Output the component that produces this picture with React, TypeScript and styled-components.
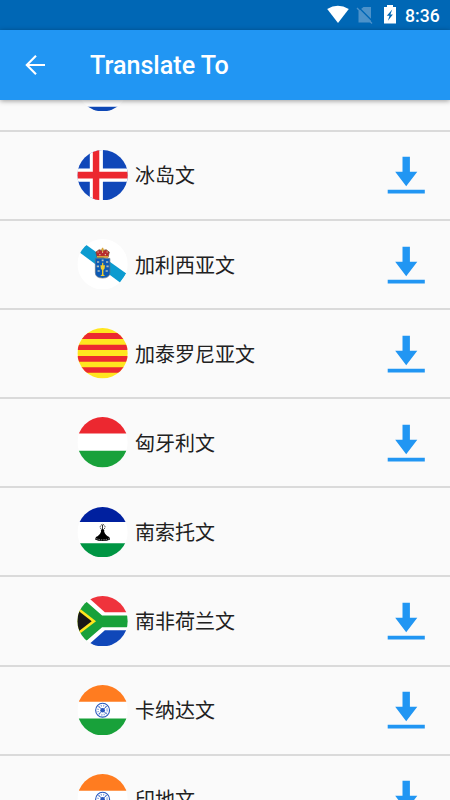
import React from 'react';
import styled, { createGlobalStyle } from 'styled-components';

const GlobalStyle = createGlobalStyle`
  * { box-sizing: border-box; }
  body { margin: 0; background: #fafafa; }
`;

const Screen = styled.div`
  display: flex;
  flex-direction: column;
  width: 450px;
  height: 800px;
  overflow: hidden;
  background: #fafafa;
  color: #212121;
  font-family: Roboto, 'Noto Sans CJK SC', sans-serif;
`;

const StatusBar = styled.header`
  flex: none;
  display: flex;
  align-items: center;
  justify-content: flex-end;
  height: 30px;
  padding: 0 10px 0 0;
  background: #0067b5;
  color: #fff;
`;

const StatusIcons = styled.svg`
  display: block;
  width: 78px;
  height: 30px;
`;

const Clock = styled.span`
  width: 35px;
  font-size: 17.6px;
  line-height: 30px;
  font-weight: 500;
  padding-top: 1px;
  white-space: nowrap;
`;

const AppBar = styled.nav`
  flex: none;
  display: flex;
  align-items: center;
  height: 70px;
  padding-left: 20px;
  background: #2196f3;
  color: #fff;
  box-shadow: 0 1px 5px rgba(0, 0, 0, 0.38);
  z-index: 1;
`;

const BackButton = styled.button`
  width: 30px;
  height: 30px;
  margin-right: 40px;
  padding: 0;
  border: 0;
  background: none;
  color: inherit;
  svg { display: block; }
`;

const Title = styled.h1`
  margin: 0;
  padding-top: 2px;
  font-size: 25.15px;
  line-height: 30px;
  font-weight: 500;
  white-space: nowrap;
`;

const ListViewport = styled.main`
  flex: 1;
  min-height: 0;
  overflow: hidden;
`;

const List = styled.ul`
  margin: -57.6px 0 0;
  padding: 0;
  list-style: none;
`;

const Row = styled.li`
  display: flex;
  align-items: center;
  height: 89.17px;
  padding: 0 25px 0 77px;
  border-bottom: 2px solid #dadada;
`;

const FlagSvg = styled.svg`
  flex: none;
  display: block;
  width: 51px;
  height: 50.4px;
  margin-right: 7px;
`;

const Label = styled.span`
  flex: 1;
  padding-top: 2.5px;
  font-size: 20px;
  line-height: 30px;
  white-space: nowrap;
`;

const DownloadSvg = styled.svg`
  flex: none;
  display: block;
  width: 38px;
  height: 38px;
  margin-top: 0.5px;
`;

type FlagName =
  | 'croatia' | 'iceland' | 'galicia' | 'catalonia'
  | 'hungary' | 'lesotho' | 'southAfrica' | 'india';

const flagArt: Record<FlagName, React.ReactNode> = {
  croatia: (
    <>
      <path fill="#ea2b31" d="M0 0h50v17H0z" />
      <path fill="#0d47b5" d="M0 45.5h50V50H0z" />
    </>
  ),
  iceland: (
    <>
      <path fill="#1047b9" d="M0 0h50v50H0z" />
      <path fill="#fff" d="M12.3 0h13v50h-13zM0 18.4h50v13.2H0z" />
      <path fill="#ec2830" d="M15.3 0h6.4v50h-6.4zM0 21.7h50v6.6H0z" />
    </>
  ),
  galicia: (
    <>
      <path fill="#0c9bd0" d="M1.6 12.9 8.6 5.8l39.9 28.5-6.2 8.8z" />
      <path fill="#0b5ab5" stroke="#5d6f84" strokeWidth=".7" d="M17.8 19.3h14.4v14q0 5.4-7.2 5.4t-7.2-5.4z" />
      <path fill="#b4bdb8" d="M19.4 22h2.2v1.6h-2.2zM28.4 22h2.2v1.6h-2.2zM19.2 26.4h2.2V28h-2.2zM28.8 26.4H31V28h-2.2zM20 31h2.2v1.6H20zM28 31h2.2v1.6H28zM24.1 20.4H26V22h-1.9z" />
      <path fill="#f1cd2d" d="M22.8 26h4.6l-.5 3.4-1.1 1.4v4.4l1.6 1.6h-4.6l1.6-1.6v-4.4l-1.1-1.4zM24.5 23.6h1.2V26h-1.2z" />
      <path fill="#b82b2e" stroke="#73532e" strokeWidth=".7" d="M19.5 18 18.3 13l3.2-2.4 3.5 1 3.5-1 3.2 2.4-1.2 5z" />
      <path fill="#d9a437" d="M19.4 16.8h11.2v1.6H19.4zM24.4 8.8h1.2v4h-1.2zM23.4 9.6h3.2v1h-3.2z" />
      <path fill="#e9e2c3" d="M20 12.4h1v1h-1zM29 12.4h1v1h-1zM24.5 12.6h1v1h-1zM21.8 15h1v1h-1zM27.2 15h1v1h-1z" />
    </>
  ),
  catalonia: (
    <>
      <path fill="#ffe51f" d="M0 0h50v50H0z" />
      <path fill="#ec2830" d="M0 5h50v5.8H0zM0 16.6h50v5.2H0zM0 27.8h50v5.6H0zM0 39h50v5.5H0z" />
    </>
  ),
  hungary: (
    <>
      <path fill="#ec2830" d="M0 0h50v16.4H0z" />
      <path fill="#18a13a" d="M0 33.5h50V50H0z" />
    </>
  ),
  lesotho: (
    <>
      <path fill="#00209f" d="M0 0h50v14.8H0z" />
      <path fill="#009543" d="M0 36h50v14H0z" />
      <path fill="none" stroke="#222" strokeWidth=".8" strokeDasharray="1.4 .7" d="M25 23c-3.2-1.6-3.2-4.6 0-6 3.2 1.4 3.2 4.4 0 6z" />
      <path d="M24.6 17.5h.8v4.5l1.4 1.2-.3 1c.8 3 3 4.4 5.1 5.6l.9 2.4q-2.8 1.6-7.5 1.6t-7.5-1.6l.9-2.4c2.1-1.2 4.3-2.6 5.1-5.6l-.3-1 1.4-1.2z" />
      <path fill="none" stroke="#aaa" strokeWidth=".8" strokeDasharray="1.4 1" d="M18.6 31.4q6.4 2.4 12.8 0" />
    </>
  ),
  southAfrica: (
    <>
      <path fill="#ef333c" d="M9.2 0H50v16H27.2z" />
      <path fill="#1047b9" d="M9.2 50H50V34H27.2z" />
      <path fill="#18a13a" d="M2.5 0 24.5 19.3H50v11.6H24.5L2.5 50H0V0z" />
      <path fill="#ffe51f" d="M0 10.7 18.5 25 0 39.3z" />
      <path fill="#171717" d="M0 14 14.2 25 0 36z" />
    </>
  ),
  india: (
    <>
      <path fill="#ff7c20" d="M0 0h50v16.6H0z" />
      <path fill="#18a13a" d="M0 33.3h50V50H0z" />
      <circle cx="25" cy="25" r="6.9" fill="none" stroke="#2857bd" strokeWidth="1.1" />
      <circle cx="25" cy="25" r="4.6" fill="none" stroke="#8fa9df" strokeWidth="1.8" strokeDasharray="1.2 1.2" />
      <path stroke="#2857bd" strokeWidth=".8" d="m21 21 8 8m0-8-8 8" />
      <circle cx="25" cy="25" r="2.3" fill="#2857bd" />
    </>
  ),
};

function Flag({ name, id }: { name: FlagName; id: string }) {
  return (
    <FlagSvg viewBox="-0.4 0 50.6 50" aria-hidden="true">
      <clipPath id={id}><circle cx="25" cy="25" r="25" /></clipPath>
      <g clipPath={`url(#${id})`}>
        <path fill="#fff" d="M0 0h50v50H0z" />
        {flagArt[name]}
      </g>
    </FlagSvg>
  );
}

function DownloadIcon() {
  return (
    <DownloadSvg viewBox="0 0 38 38" fill="#2196f3" aria-label="Download">
      <path d="M15.5.8h7.4v15h7.4L19.2 30.2 8.2 15.8h7.3zM.7 33.7h37.1v3.8H.7z" />
    </DownloadSvg>
  );
}

const languages: { label: string; flag: FlagName; downloadable: boolean }[] = [
  { label: '', flag: 'croatia', downloadable: false },
  { label: '冰岛文', flag: 'iceland', downloadable: true },
  { label: '加利西亚文', flag: 'galicia', downloadable: true },
  { label: '加泰罗尼亚文', flag: 'catalonia', downloadable: true },
  { label: '匈牙利文', flag: 'hungary', downloadable: true },
  { label: '南索托文', flag: 'lesotho', downloadable: false },
  { label: '南非荷兰文', flag: 'southAfrica', downloadable: true },
  { label: '卡纳达文', flag: 'india', downloadable: true },
  { label: '印地文', flag: 'india', downloadable: true },
];

export default function App() {
  return (
    <Screen lang="zh-CN">
      <GlobalStyle />
      <StatusBar>
        <StatusIcons viewBox="327 0 78 30" aria-hidden="true">
          <path fill="#fff" d="M327.2 9q10.5-6.3 21.6 0L338 23z" />
          <path fill="#4c92ca" d="M363.5 7H371v15.5h-12.5V11z" />
          <path stroke="#0067b5" strokeWidth="1.5" d="m358 6.8 15 15" />
          <path stroke="#4c92ca" strokeWidth="1.3" d="m357 8 15 15.5" />
          <path fill="#fff" d="M387 5h6v2h3v16.5h-12V7h3z" />
          <path fill="#0067b5" d="m392.2 9.5-5.4 6.3h2.7l-1.6 5 5-6.3h-2.5z" />
        </StatusIcons>
        <Clock>8:36</Clock>
      </StatusBar>
      <AppBar>
        <BackButton aria-label="Back">
          <svg width="30" height="30" viewBox="0 0 30 30" fill="none" stroke="#fff" strokeWidth="2.1">
            <path d="M25 15H7M16 5.8 6.8 15l9.2 9.2" />
          </svg>
        </BackButton>
        <Title>Translate To</Title>
      </AppBar>
      <ListViewport>
        <List>
          {languages.map(({ label, flag, downloadable }, index) => (
            <Row key={index}>
              <Flag name={flag} id={`flag-clip-${index}`} />
              <Label>{label}</Label>
              {downloadable && <DownloadIcon />}
            </Row>
          ))}
        </List>
      </ListViewport>
    </Screen>
  );
}
